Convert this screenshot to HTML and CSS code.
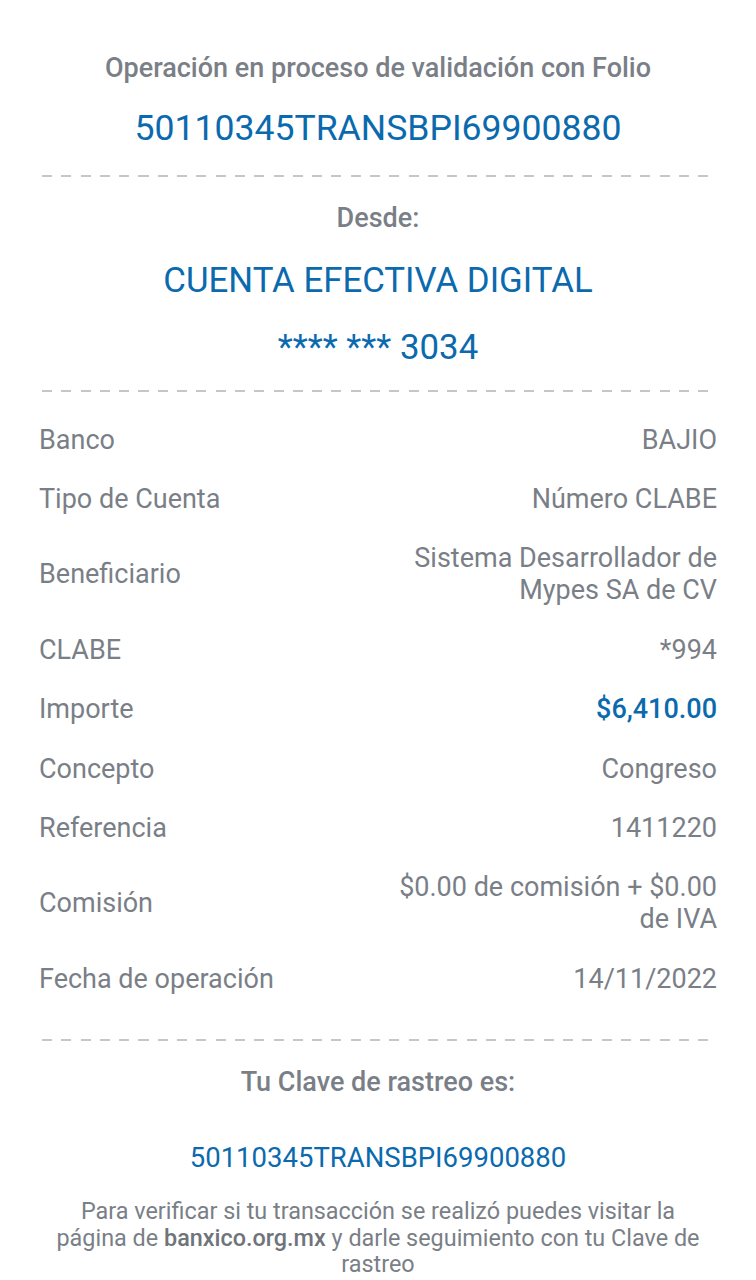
FILE: index.html
```html
<!DOCTYPE html>
<html lang="es">
<head>
<meta charset="utf-8">
<title>Operación en proceso</title>
<link rel="stylesheet" href="styles.css">
</head>
<body>
<main class="receipt">
  <section class="block block-top">
    <p class="heading">Operación en proceso de validación con Folio</p>
    <p class="folio">50110345TRANSBPI69900880</p>
  </section>
  <div class="dash"></div>
  <section class="block block-from">
    <p class="heading">Desde:</p>
    <p class="account">CUENTA EFECTIVA DIGITAL</p>
    <p class="account-num">**** *** 3034</p>
  </section>
  <div class="dash"></div>
  <section class="details">
    <div class="row"><span class="label">Banco</span><span class="value">BAJIO</span></div>
    <div class="row"><span class="label">Tipo de Cuenta</span><span class="value">Número CLABE</span></div>
    <div class="row"><span class="label">Beneficiario</span><span class="value">Sistema Desarrollador de Mypes SA de CV</span></div>
    <div class="row"><span class="label">CLABE</span><span class="value">*994</span></div>
    <div class="row"><span class="label">Importe</span><span class="value value-blue">$6,410.00</span></div>
    <div class="row"><span class="label">Concepto</span><span class="value">Congreso</span></div>
    <div class="row"><span class="label">Referencia</span><span class="value">1411220</span></div>
    <div class="row"><span class="label">Comisión</span><span class="value">$0.00 de comisión + $0.00 de IVA</span></div>
    <div class="row"><span class="label">Fecha de operación</span><span class="value">14/11/2022</span></div>
  </section>
  <div class="dash"></div>
  <section class="block block-track">
    <p class="heading">Tu Clave de rastreo es:</p>
    <p class="track">50110345TRANSBPI69900880</p>
    <p class="note">
      <span class="note-line">Para verificar si tu transacción se realizó puedes visitar la</span>
      <span class="note-line">página de <b>banxico.org.mx</b> y darle seguimiento con tu Clave de</span>
      <span class="note-line">rastreo</span>
    </p>
  </section>
</main>
</body>
</html>
```
FILE: styles.css
```css
* { box-sizing: border-box; }
html, body {
  margin: 0;
  padding: 0;
  background: #ffffff;
}
body {
  font-family: Roboto, "Liberation Sans", sans-serif;
  color: #7a7f87;
  width: 756px;
}
p { margin: 0; }
.receipt {
  padding: 0 39px 0 39px;
  display: flex;
  flex-direction: column;
}
.block {
  display: flex;
  flex-direction: column;
  align-items: center;
  text-align: center;
}
.heading {
  font-size: 27px;
  font-weight: 500;
  line-height: 32px;
  color: #7a7f87;
}
.block-top { padding-top: 52px; }
.folio {
  margin-top: 23px;
  font-size: 35.6px;
  line-height: 42px;
  color: #0b6aae;
}
.dash {
  height: 2px;
  margin: 0 7px 0 3px;
  background: repeating-linear-gradient(to right, #c6c6c6 0 10px, transparent 10px 19.3px);
}
.block-top + .dash { margin-top: 26px; }
.block-from { padding-top: 25px; }
.account {
  margin-top: 25px;
  font-size: 34.8px;
  line-height: 42px;
  color: #0b6aae;
}
.account-num {
  margin-top: 25px;
  font-size: 34.8px;
  line-height: 42px;
  color: #0b6aae;
}
.block-from + .dash { margin-top: 22px; }
.details {
  padding-top: 18px;
  padding-bottom: 31px;
  display: flex;
  flex-direction: column;
}
.row {
  display: flex;
  justify-content: space-between;
  align-items: center;
  gap: 20px;
  padding: 13.7px 0;
  font-size: 27px;
  line-height: 32px;
}
.label { flex: none; }
.value {
  max-width: 330px;
  text-align: right;
}
.value-blue { color: #0b6aae; font-weight: 500; }
.block-track { padding-top: 25px; }
.track {
  margin-top: 44px;
  font-size: 27.5px;
  line-height: 32px;
  color: #0b6aae;
}
.note {
  margin-top: 24px;
  font-size: 23.4px;
  line-height: 26.5px;
  color: #7a7f87;
  display: flex;
  flex-direction: column;
  align-items: center;
}
.note-line { display: block; white-space: nowrap; }
.note b { font-weight: 500; color: #6f747b; }
```
